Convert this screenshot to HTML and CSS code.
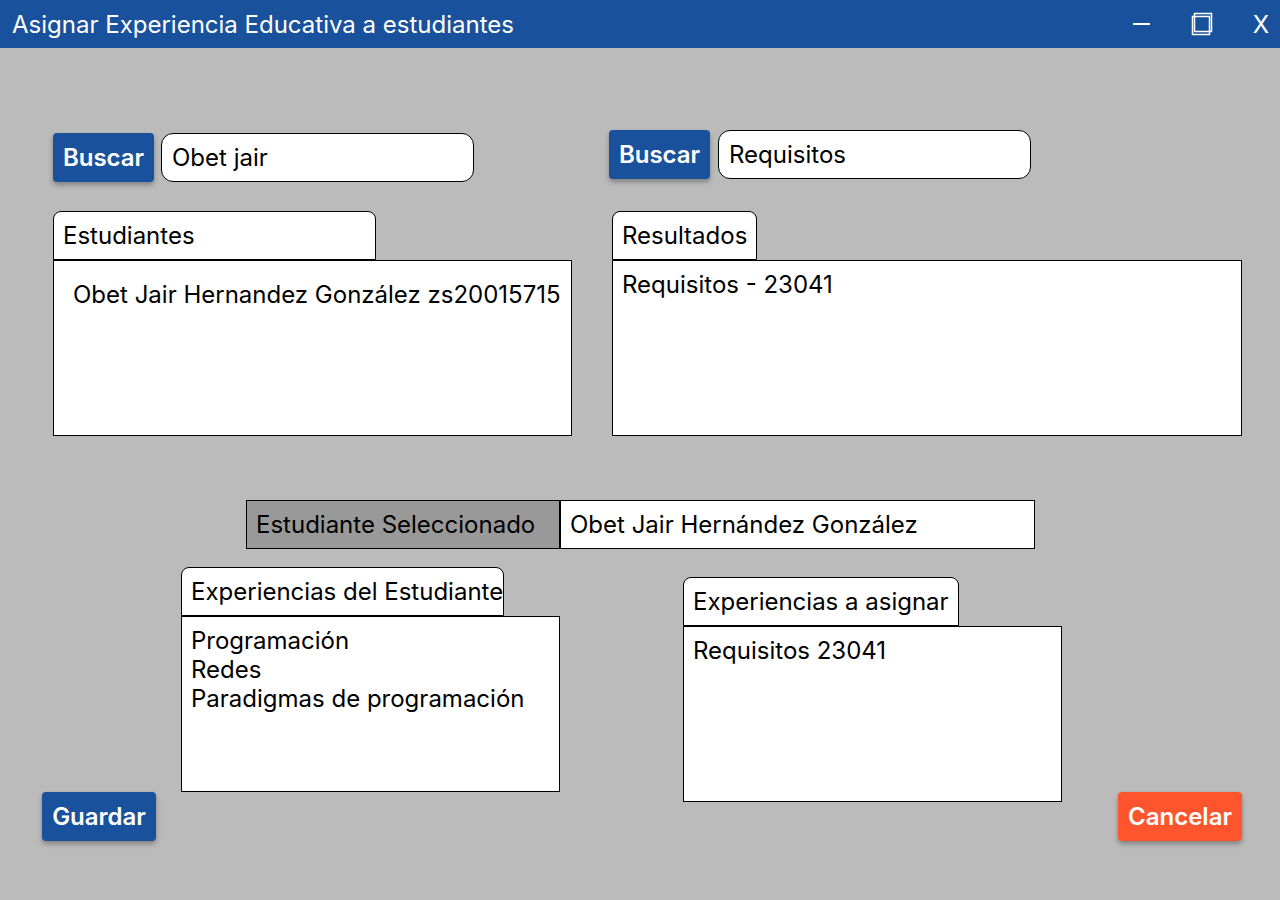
FILE: index.html
```html
<!doctype html>
<html lang="es">
<head>
	<meta charset="UTF-8">
	<title>Asignar Experiencia Educativa a estudiantes</title>
	<link rel="stylesheet" href="styles.css">
</head>
<body>
	<div class="titlebar">
		<span class="title">Asignar Experiencia Educativa a estudiantes</span>
		<div class="controls">
			<span class="min"></span>
			<svg class="max" width="22" height="24" viewBox="0 0 22 24">
				<rect x="3.5" y="1.5" width="17" height="18" fill="none" stroke="#fff" stroke-width="1.5"/>
				<rect x="1.5" y="4.5" width="17" height="18" fill="none" stroke="#fff" stroke-width="1.5"/>
			</svg>
			<span class="close">X</span>
		</div>
	</div>

	<div class="top">
		<div class="col left">
			<div class="search">
				<a href="javascript:;" class="btn">Buscar</a>
				<div class="field">Obet jair</div>
			</div>
			<div class="panel">
				<div class="tab tab-est">Estudiantes</div>
				<div class="box box-est">Obet Jair Hernandez González zs20015715</div>
			</div>
		</div>
		<div class="col right">
			<div class="search">
				<a href="javascript:;" class="btn">Buscar</a>
				<div class="field">Requisitos</div>
			</div>
			<div class="panel">
				<div class="tab">Resultados</div>
				<div class="box box-res">Requisitos - 23041</div>
			</div>
		</div>
	</div>

	<div class="selected">
		<div class="sel-label">Estudiante Seleccionado</div>
		<div class="sel-value">Obet Jair Hernández González</div>
	</div>

	<div class="lower">
		<a href="javascript:;" class="btn btn-save">Guardar</a>
		<div class="panel panel-exp">
			<div class="tab tab-exp">Experiencias del Estudiante</div>
			<div class="box box-list">
				Programación<br>
				Redes<br>
				Paradigmas de programación
			</div>
		</div>
		<div class="panel panel-asig">
			<div class="tab">Experiencias a asignar</div>
			<div class="box box-list">Requisitos 23041</div>
		</div>
		<a href="javascript:;" class="btn btn-cancel">Cancelar</a>
	</div>
</body>
</html>
```

FILE: styles.css
```css
body{
	margin:0;
	padding:0;
	background:#bbbbbb;
	font-family:Inter,"Noto Sans",sans-serif;
	font-size:24px;
	color:#000;
	width:1280px;
	height:900px;
	overflow:hidden;
}
*{
	box-sizing:border-box;
}
a{
	text-decoration:none;
}

/* barra de titulo */
.titlebar{
	height:48px;
	background:#1a519c;
	color:#fff;
	display:flex;
	align-items:center;
	justify-content:space-between;
	padding-left:12px;
}
.title{
	font-size:24px;
}
.controls{
	display:flex;
	align-items:center;
	height:100%;
}
.min{
	width:17px;
	height:1.5px;
	background:#fff;
	margin-right:41px;
}
.max{
	display:block;
	margin-right:40px;
}
.close{
	font-size:24px;
	margin-right:11px;
}

/* botones */
.btn{
	display:flex;
	align-items:center;
	justify-content:center;
	height:49px;
	background:#1a519c;
	color:#fff;
	font-weight:600;
	border-radius:4px;
	box-shadow:0 3px 5px rgba(0,0,0,.3);
}

/* parte superior */
.top{
	display:flex;
}
.col.left{
	margin-left:53px;
	width:519px;
	padding-top:85px;
}
.col.right{
	margin-left:37px;
	padding-top:82px;
}
.search{
	display:flex;
	gap:8px;
	height:49px;
}
.left .search{
	gap:7px;
	margin-bottom:29px;
}
.right .search{
	margin-bottom:32px;
}
.search .btn{
	width:101px;
}
.field{
	width:313px;
	height:49px;
	background:#fff;
	border:1px solid #000;
	border-radius:12px;
	display:flex;
	align-items:center;
	padding-left:10px;
}
.right .panel{
	margin-left:3px;
}

/* paneles con pestaña */
.panel{
	display:flex;
	flex-direction:column;
	align-items:flex-start;
}
.tab{
	display:flex;
	align-items:center;
	height:49px;
	padding:0 9px;
	background:#fff;
	border:1px solid #000;
	border-radius:8px 8px 0 0;
	white-space:nowrap;
}
.tab-est{
	width:323px;
}
.box{
	background:#fff;
	border:1px solid #000;
	height:176px;
	line-height:29px;
}
.box-est{
	width:519px;
	padding:19px 0 0 19px;
}
.box-res{
	width:630px;
	padding:9px 0 0 9px;
}

/* estudiante seleccionado */
.selected{
	display:flex;
	margin:64px 0 0 246px;
	height:49px;
	width:789px;
	border:1px solid #000;
}
.sel-label{
	width:314px;
	background:#999999;
	border-right:2px solid #000;
	display:flex;
	align-items:center;
	padding-left:9px;
}
.sel-value{
	flex:1;
	background:#fff;
	display:flex;
	align-items:center;
	padding-left:9px;
}

/* parte inferior */
.lower{
	display:flex;
	align-items:flex-start;
	margin:18px 0 0 42px;
}
.btn-save{
	width:114px;
	margin-top:225px;
}
.panel-exp{
	margin-left:25px;
	width:379px;
}
.tab-exp{
	width:323px;
	padding-right:0;
}
.panel-asig{
	margin-left:123px;
	margin-top:10px;
	width:379px;
}
.box-list{
	width:379px;
	padding:9px 0 0 9px;
}
.btn-cancel{
	width:124px;
	margin-top:225px;
	margin-left:56px;
	background:#ff552e;
}
```
